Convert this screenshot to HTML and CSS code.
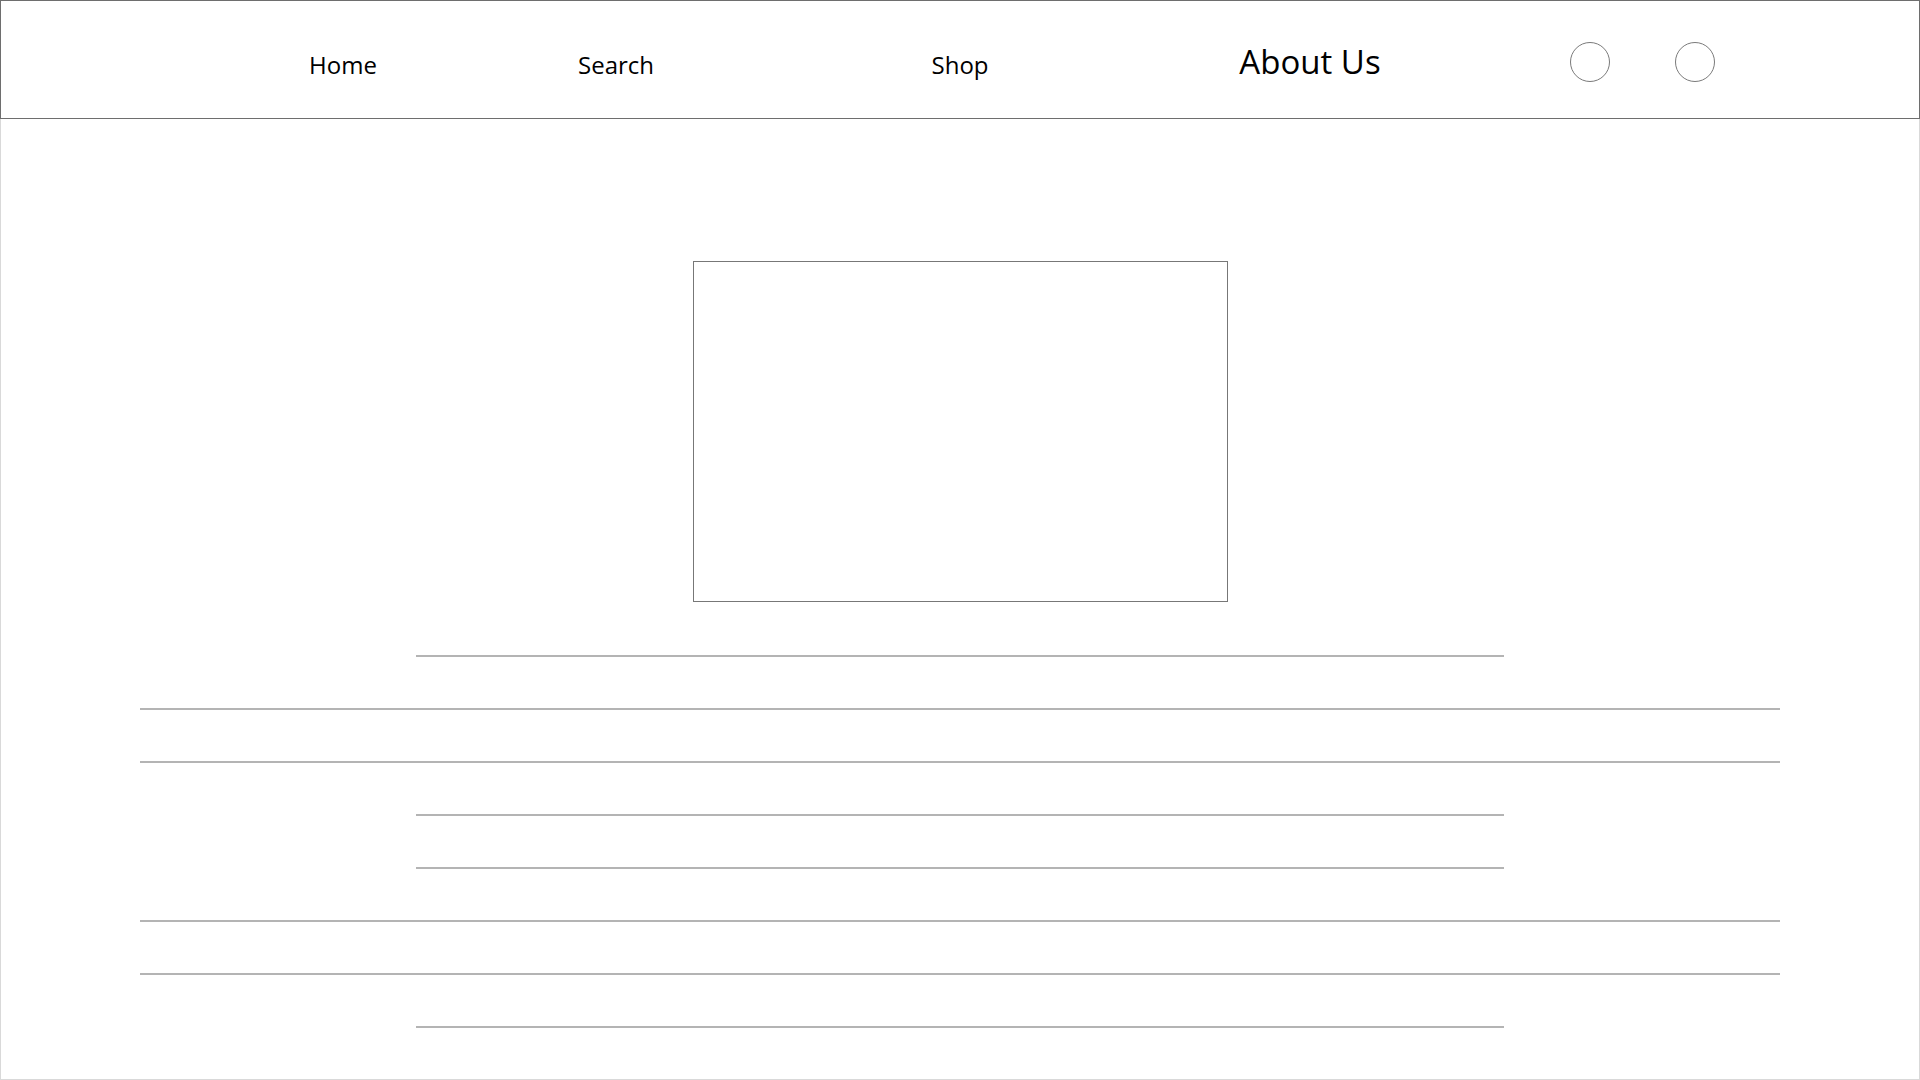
FILE: index.html
```html
<!DOCTYPE html>
<html lang="en">

<head>
    <meta charset="UTF-8">
    <meta name="viewport" content="width=device-width, initial-scale=1.0">
    <title>About Us</title>
    <link rel="stylesheet" href="styles.css">
</head>

<body>
    <div class="page">
        <header class="top-bar">
            <a class="nav-link" href="#">Home</a>
            <a class="nav-link nav-search" href="#">Search</a>
            <a class="nav-link nav-shop" href="#">Shop</a>
            <a class="nav-link nav-about" href="#">About Us</a>
            <span class="nav-circle nav-circle-first"></span>
            <span class="nav-circle nav-circle-second"></span>
        </header>

        <main class="content">
            <div class="picture-box"></div>

            <!-- placeholder text lines -->
            <div class="text-lines">
                <div class="line short"></div>
                <div class="line long"></div>
                <div class="line long"></div>
                <div class="line short"></div>
                <div class="line short"></div>
                <div class="line long"></div>
                <div class="line long"></div>
                <div class="line short"></div>
            </div>
        </main>
    </div>
</body>

</html>
```

FILE: styles.css
```css
* {
    margin: 0;
    padding: 0;
    box-sizing: border-box;
}

body {
    font-family: 'Segoe UI', 'Open Sans', 'Noto Sans', sans-serif;
    background-color: #fff;
    color: #000;
}

.page {
    width: 100%;
    height: 100vh;
    overflow: hidden;
    background-color: #fff;
    box-shadow: inset 0 0 0 1px #d9d9d9;
}

/* Top navigation */
.top-bar {
    display: flex;
    align-items: center;
    height: 119px;
    padding-left: 242px;
    border: 1px solid #6e6e6e;
    background-color: #fff;
}

.nav-link {
    width: 200px;
    padding-top: 10px;
    font-size: 24px;
    line-height: 32px;
    text-align: center;
    color: #000;
    text-decoration: none;
}

.nav-search {
    margin-left: 73px;
}

.nav-shop {
    margin-left: 144px;
}

.nav-about {
    margin-left: 150px;
    padding-top: 4px;
    font-size: 33px;
    line-height: 40px;
}

.nav-circle {
    width: 40px;
    height: 40px;
    margin-top: 5px;
    border: 1px solid #7a7a7a;
    border-radius: 50%;
}

.nav-circle-first {
    margin-left: 160px;
}

.nav-circle-second {
    margin-left: 65px;
}

/* Main area */
.content {
    display: flex;
    flex-direction: column;
    align-items: center;
    padding-top: 142px;
}

.picture-box {
    width: 535px;
    height: 341px;
    border: 1px solid #777;
}

.text-lines {
    display: flex;
    flex-direction: column;
    align-items: center;
    gap: 51px;
    margin-top: 53px;
}

.line {
    height: 2px;
    background-color: #b4b4b4;
}

.line.short {
    width: 1088px;
}

.line.long {
    width: 1640px;
}
```
